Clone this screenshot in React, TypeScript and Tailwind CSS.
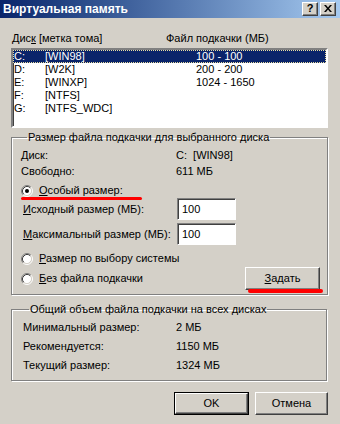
import React from "react";

const raised =
  "border border-t-white border-l-white border-r-[#404040] border-b-[#404040] shadow-[inset_-1px_-1px_0_#808080]";
const sunken =
  "border border-t-[#808080] border-l-[#808080] border-r-white border-b-white shadow-[inset_1px_1px_0_#404040]";
const group =
  "border border-[#808080] shadow-[inset_1px_1px_0_#fff,1px_1px_0_#fff] min-w-0";

function Radio({ checked }: { checked?: boolean }) {
  return (
    <svg width="12" height="12" viewBox="0 0 12 12" className="shrink-0">
      <circle cx="6" cy="6" r="4.5" fill="#fff" />
      <path d="M2.11 9.89A5.5 5.5 0 0 1 9.89 2.11" stroke="#808080" fill="none" />
      <path d="M9.89 2.11A5.5 5.5 0 0 1 2.11 9.89" stroke="#fff" fill="none" />
      <path d="M2.82 9.18A4.5 4.5 0 0 1 9.18 2.82" stroke="#404040" fill="none" />
      <path d="M9.18 2.82A4.5 4.5 0 0 1 2.82 9.18" stroke="#d4d0c8" fill="none" />
      {checked && <circle cx="6" cy="6" r="2" fill="#000" />}
    </svg>
  );
}

const drives = [
  { d: "C:", label: "[WIN98]", size: "100 - 100" },
  { d: "D:", label: "[W2K]", size: "200 - 200" },
  { d: "E:", label: "[WINXP]", size: "1024 - 1650" },
  { d: "F:", label: "[NTFS]", size: "" },
  { d: "G:", label: "[NTFS_WDC]", size: "" },
];

export default function App() {
  return (
    <div className="w-[340px] h-[424px] bg-[#d4d0c8] overflow-hidden flex flex-col text-[11px] leading-[13px] text-black font-['Liberation_Sans',Arial,sans-serif]">
      {/* title bar */}
      <div className="h-[18px] shrink-0 flex items-center justify-between pl-[3px] pr-[4px] bg-gradient-to-r from-[#0a246a] to-[#a6caf0]">
        <span className="text-white font-bold text-[12px]">Виртуальная память</span>
        <div className="flex gap-[2px] mb-[1px]">
          <div className={`w-[16px] h-[14px] bg-[#d4d0c8] flex items-center justify-center font-bold text-[11px] ${raised}`}>?</div>
          <div className={`w-[16px] h-[14px] bg-[#d4d0c8] flex items-center justify-center ${raised}`}>
            <svg width="8" height="7" viewBox="0 0 8 7">
              <path d="M0 0h2l2 2.5L6 0h2L5 3.5 8 7H6L4 4.5 2 7H0l3-3.5z" fill="#000" />
            </svg>
          </div>
        </div>
      </div>

      <div className="pl-[11px] w-[328px] flex flex-col">
        <div className="mt-[14px] h-[13px] flex">
          <span className="pl-[1px] w-[155px]">
            Дис<u>к</u> [метка тома]
          </span>
          <span>Файл подкачки (МБ)</span>
        </div>

        {/* drive list */}
        <div className={`mt-[3px] h-[80px] bg-white ${sunken} border-2 p-0`}>
          {drives.map((r, i) => (
            <div
              key={r.d}
              className={`h-[13px] flex ${
                i === 0 ? "bg-[#0a246a] text-white border border-dotted border-[#e8dca0]" : "pl-[1px]"
              }`}
            >
              <span className={`w-[31px] ${i === 0 ? "leading-[11px]" : ""}`}>{r.d}</span>
              <span className={`w-[151px] ${i === 0 ? "leading-[11px]" : ""}`}>{r.label}</span>
              <span className={i === 0 ? "leading-[11px]" : ""}>{r.size}</span>
            </div>
          ))}
        </div>

        {/* group: selected drive */}
        <fieldset className={`mt-[3px] w-[317px] pl-[9px] pr-[7px] pb-[4px] ${group}`}>
          <legend className="ml-[6px] px-[1px] h-[13px]">Размер файла подкачки для выбранного диска</legend>
          <div className="mt-[5px] h-[13px] flex">
            <span className="w-[155px]">Диск:</span>
            <span>C:&nbsp;&nbsp;[WIN98]</span>
          </div>
          <div className="mt-[3px] h-[13px] flex">
            <span className="w-[155px]">Свободно:</span>
            <span>611 МБ</span>
          </div>
          <div className="relative mt-[6px] h-[13px] flex items-center gap-[6px]">
            <Radio checked />
            <span>
              <u>О</u>собый размер:
            </span>
            <div className="absolute left-0 top-[13px] w-[121px] h-[3px] rounded-full bg-[#f00]" />
          </div>
          <div className="mt-[1px] h-[22px] flex items-center">
            <span className="w-[156px] pl-[2px]">
              <u>И</u>сходный размер (МБ):
            </span>
            <div className={`w-[59px] h-[22px] bg-white pl-[4px] flex items-center ${sunken}`}>100</div>
          </div>
          <div className="mt-[3px] h-[22px] flex items-center">
            <span className="w-[156px] pl-[2px]">
              <u>М</u>аксимальный размер (МБ):
            </span>
            <div className={`w-[59px] h-[22px] bg-white pl-[4px] flex items-center ${sunken}`}>100</div>
          </div>
          <div className="mt-[7px] h-[13px] flex items-center gap-[6px]">
            <Radio />
            <span>
              <u>Р</u>азмер по выбору системы
            </span>
          </div>
          <div className="mt-[2px] h-[23px] flex items-center justify-between">
            <div className="flex items-center gap-[6px]">
              <Radio />
              <span>
                <u>Б</u>ез файла подкачки
              </span>
            </div>
            <div className="relative">
              <div className={`w-[75px] h-[23px] flex items-center justify-center ${raised}`}>
                <span>
                  <u>З</u>адать
                </span>
              </div>
              <div className="absolute left-[3px] top-[22px] w-[75px] h-[4px] rounded-full bg-[#f00]" />
            </div>
          </div>
        </fieldset>

        {/* group: totals */}
        <fieldset className={`mt-[8px] w-[316px] px-[11px] pb-[8px] ${group}`}>
          <legend className="ml-[6px] px-[1px] h-[13px]">Общий объем файла подкачки на всех дисках</legend>
          <div className="mt-[5px] h-[13px] flex">
            <span className="w-[153px]">Минимальный размер:</span>
            <span>2 МБ</span>
          </div>
          <div className="mt-[6px] h-[13px] flex">
            <span className="w-[153px]">Рекомендуется:</span>
            <span>1150 МБ</span>
          </div>
          <div className="mt-[6px] h-[13px] flex">
            <span className="w-[153px]">Текущий размер:</span>
            <span>1324 МБ</span>
          </div>
        </fieldset>

        <div className="mt-[11px] pl-[163px] flex gap-[6px]">
          <div className="border border-black">
            <div className={`w-[73px] h-[21px] flex items-center justify-center ${raised}`}>OK</div>
          </div>
          <div className={`w-[75px] h-[23px] flex items-center justify-center ${raised}`}>Отмена</div>
        </div>
      </div>
    </div>
  );
}
